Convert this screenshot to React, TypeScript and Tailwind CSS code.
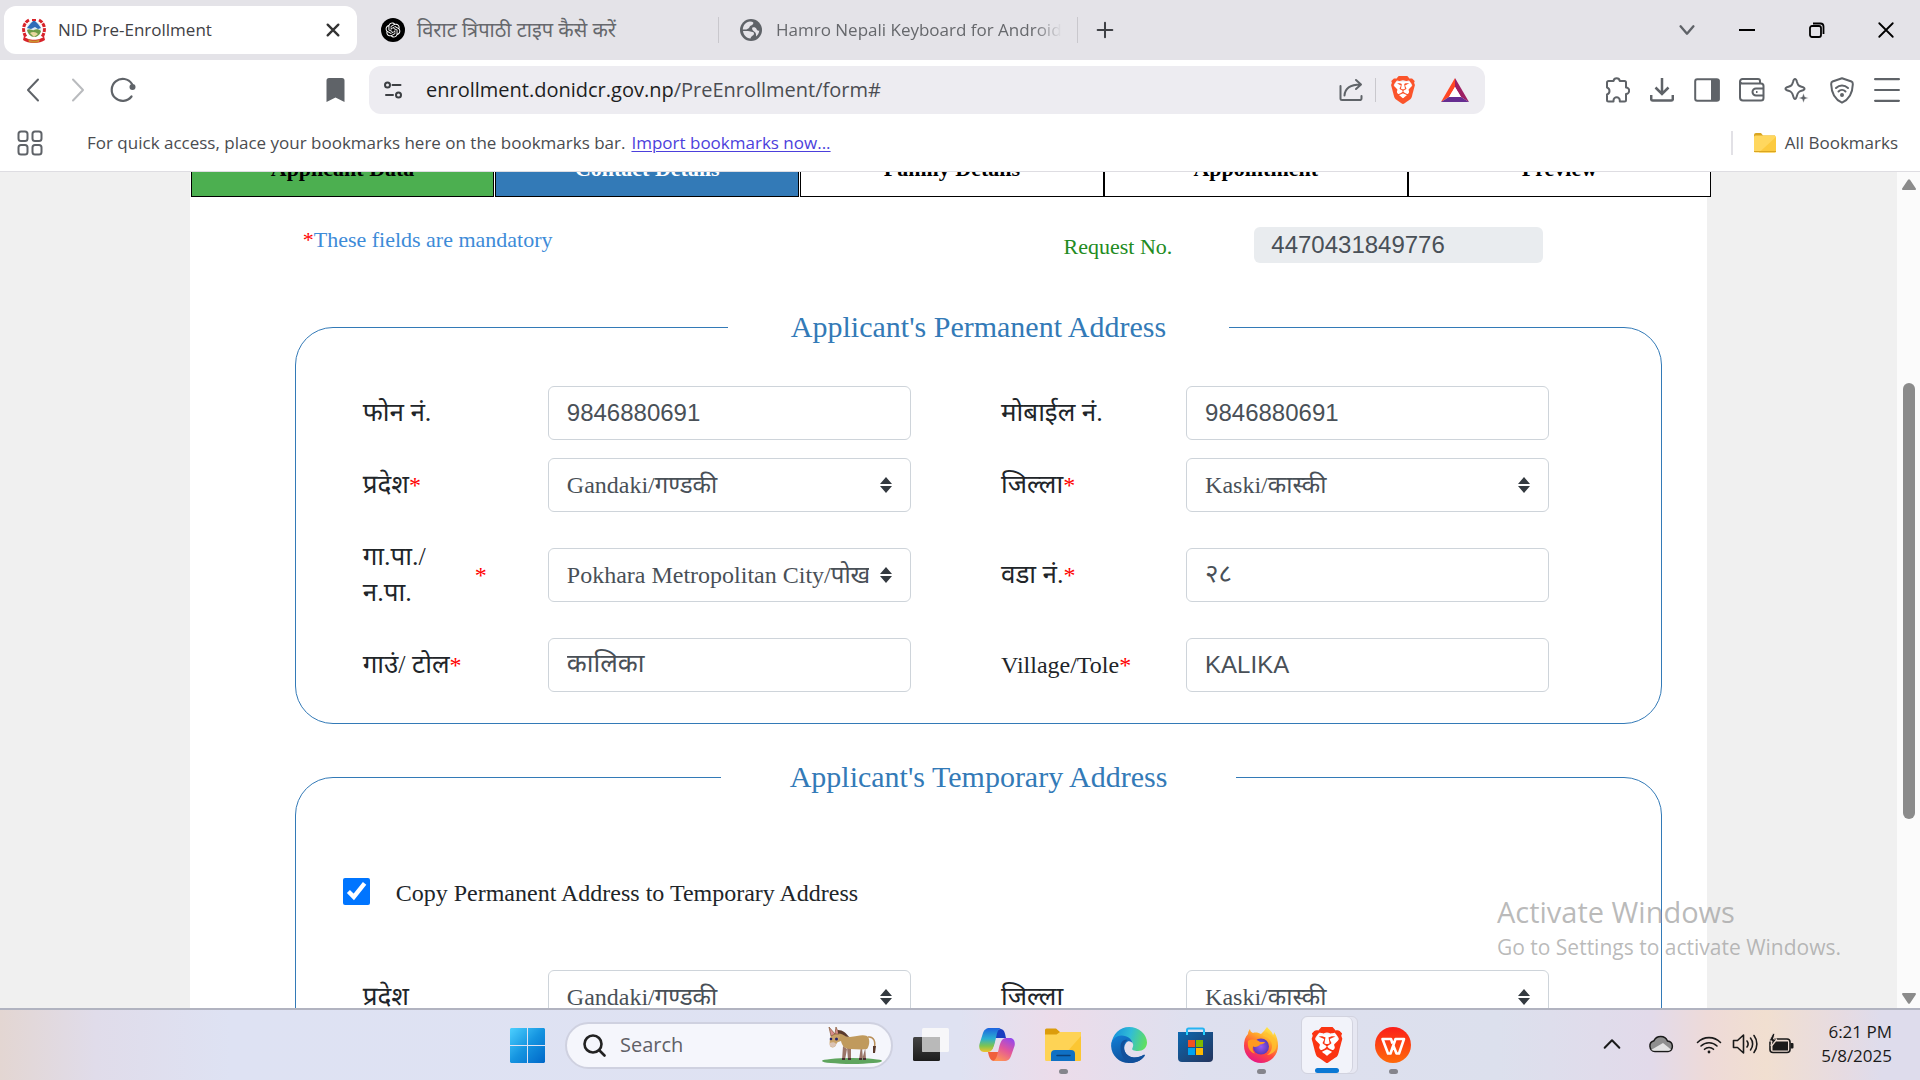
import React from "react";
import { SiBrave } from "react-icons/si";
import { RiOpenaiFill } from "react-icons/ri";

const UI = "font-['Open_Sans','Noto_Sans_Devanagari',sans-serif]";
const SERIF = "font-['Liberation_Serif','Noto_Sans_Devanagari',serif]";

/* ---------- small drawings ---------- */

function NepalEmblem() {
  return (
    <svg width="24" height="25" viewBox="0 0 24 25">
      <path d="M7 2C1 5 0 13 4 19" fill="none" stroke="#d8232a" strokeWidth="3" strokeDasharray="4 1" />
      <path d="M17 2c6 3 7 11 3 17" fill="none" stroke="#d8232a" strokeWidth="3" strokeDasharray="4 1" />
      <circle cx="12" cy="11" r="7.5" fill="#dcebf5" />
      <path d="M5 10l4-5 3-3 4 4 3 4-3 1-3-2-4 2z" fill="#2d6cb8" />
      <path d="M5 12c3-2 5 1 7 0s5-1 7 1c-1 4-4 6-7 6s-6-3-7-7z" fill="#6d9c46" />
      <path d="M8 15c3-2 6-1 8 1l-4 3z" fill="#e9d8a0" />
      <path d="M2 18c3 5 17 5 20 0l1 4c-5 4-17 4-22 0z" fill="#d8232a" />
      <path d="M6 21c3 2 9 2 12 0l-1 3c-3 1-7 1-10 0z" fill="#c9932f" />
      <path d="M10 1h4v2h-4z" fill="#d8232a" />
    </svg>
  );
}

function Globe() {
  return (
    <svg width="22" height="22" viewBox="0 0 22 22">
      <circle cx="11" cy="11" r="11" fill="#5f6368" />
      <path d="M10 2.5c3 0 4 1 3 2.5-1 1.600-3 1.500-3.500 3-.4 1.500-2 1.500-3 2.500H2.800C3 6 6 3 10 2.500z" fill="#e4e3e8" />
      <path d="M3 12h5c2 0 3 1 4.500 1s2 1.500 1 3c-.8 1-2.500 1-3 3.500C6 19 3.500 16 3 12z" fill="#e4e3e8" />
      <path d="M12.500 8.500c1.500-.6 3.500 0 4 1.500s1.500 2 2.800 1.500c-.3 3-1.800 5-3.300 6 .3-2 0-3.500-1.300-4.500-1.500-1-3.500-3-2.200-4.500z" fill="#e4e3e8" />
    </svg>
  );
}

function Line({ d, size = 24, color = "#5f6368", w = 2 }: { d: string; size?: number; color?: string; w?: number }) {
  return (
    <svg width={size} height={size} viewBox="0 0 24 24" fill="none" stroke={color} strokeWidth={w} strokeLinecap="round" strokeLinejoin="round">
      <path d={d} />
    </svg>
  );
}

function Reload() {
  return (
    <svg width="26" height="26" viewBox="0 0 26 26" fill="none" stroke="#5f6368" strokeWidth="2.200">
      <path d="M21.500 19.500A11 11 0 1 1 22 7" strokeLinecap="round" />
      <circle cx="22.500" cy="10" r="3" fill="#5f6368" stroke="none" />
    </svg>
  );
}

function Tune() {
  return (
    <svg width="18" height="18" viewBox="0 0 18 18" fill="none" stroke="#3c3f43" strokeWidth="2">
      <circle cx="3.500" cy="4" r="2.500" />
      <path d="M8.500 4h8M2 14h7" strokeLinecap="round" />
      <circle cx="14.500" cy="14" r="2.500" />
    </svg>
  );
}

function Share() {
  return (
    <svg width="24" height="24" viewBox="0 0 24 24" fill="none" stroke="#5f6368" strokeWidth="2" strokeLinecap="round" strokeLinejoin="round">
      <path d="M1.500 8v12.500a1.500 1.500 0 0 0 1.500 1.500h18.500a1.500 1.500 0 0 0 1-1.500V18" />
      <path d="M5.500 17.500C6 10 11 6.500 21.500 6.500M17 2l5 4.500-5 4.500" />
    </svg>
  );
}

function Lion({ size, color, face }: { size: number; color: string; face: string }) {
  return (
    <svg width={size} height={size} viewBox="0 0 24 24">
      <path d="M6 5h12l2 6-4 8-4 3-4-3-4-8z" fill={face} />
      <SiBrave size={24} color={color} />
    </svg>
  );
}

function Bat() {
  return (
    <svg width="28" height="24" viewBox="0 0 28 24">
      <path d="M14 0L0 24l8-5 6-10z" fill="#ff4724" />
      <path d="M14 0l14 24-8-5-6-10z" fill="#9e1f63" />
      <path d="M0 24h28l-8-5H8z" fill="#662d91" />
      <path d="M14 9l6 10H8z" fill="#fff" />
    </svg>
  );
}

function Puzzle() {
  return (
    <svg width="26" height="26" viewBox="0 0 26 26" fill="none" stroke="#5f6368" strokeWidth="2" strokeLinejoin="round">
      <path d="M3 5.500a1.500 1.500 0 0 1 1.500-1.500H9.500a3.200 3.200 0 0 1 6.300 0H20.500A1.500 1.500 0 0 1 22 5.500V10.500a3.200 3.200 0 0 1 0 6.400V23a1.500 1.500 0 0 1-1.500 1.500H15.800v-1a3 3 0 0 0-6.300 0v1H4.500A1.500 1.500 0 0 1 3 23v-5.500a3.700 3.700 0 0 0 0-7z" />
    </svg>
  );
}

function Download() {
  return (
    <svg width="24" height="24" viewBox="0 0 24 24" fill="none" stroke="#5f6368" strokeWidth="2.500">
      <path d="M12 0v15M5.500 9.500L12 16l6.500-6.500" />
      <path d="M1.200 17v4a1.500 1.500 0 0 0 1.500 1.500h18.600a1.500 1.500 0 0 0 1.500-1.500v-4" />
    </svg>
  );
}

function Sidebar() {
  return (
    <svg width="26" height="24" viewBox="0 0 26 24">
      <rect x="1.200" y="1.200" width="23.600" height="21.600" rx="2" fill="none" stroke="#5f6368" strokeWidth="2" />
      <path d="M17 1h7a1.500 1.500 0 0 1 1.500 1.500v19A1.500 1.500 0 0 1 24 23h-7z" fill="#5f6368" />
    </svg>
  );
}

function Wallet() {
  return (
    <svg width="26" height="24" viewBox="0 0 26 24" fill="none" stroke="#5f6368" strokeWidth="2" strokeLinejoin="round">
      <path d="M21 5.500V3a2 2 0 0 0-2-2H3.500A2.500 2.500 0 0 0 1 3.500v16A3 3 0 0 0 4 22.500h18a2.500 2.500 0 0 0 2.500-2.500V8A2.500 2.500 0 0 0 22 5.500H3.500A2.300 2.300 0 0 1 1 3.500" />
      <path d="M24.500 10.500H17a3.500 3.500 0 0 0 0 7h7.500M17 14h1.500" />
    </svg>
  );
}

function Sparkle() {
  return (
    <svg width="26" height="26" viewBox="0 0 26 26">
      <path d="M11 2c1 0 1.500 1 2 3 .9 3.200 1.500 3.800 4.500 4.700 2 .6 3 1 3 2s-1 1.500-3 2.100c-3 .9-3.600 1.600-4.500 4.700-.5 2-1 3.500-2 3.500s-1.500-1.500-2-3.500c-.9-3.100-1.500-3.800-4.500-4.700-2-.6-3-1.100-3-2.100s1-1.400 3-2C7.500 8.800 8.100 8.200 9 5c.5-2 1-3 2-3z" fill="none" stroke="#5f6368" strokeWidth="2" />
      <path d="M19.500 16l1.300 3.700 3.700 1.300-3.700 1.300-1.300 3.700-1.300-3.700-3.700-1.300 3.700-1.300z" fill="#5f6368" stroke="#fff" strokeWidth=".5" />
    </svg>
  );
}

function Vpn() {
  return (
    <svg width="24" height="27" viewBox="0 0 24 27" fill="none" stroke="#5f6368" strokeWidth="2" strokeLinejoin="round" strokeLinecap="round">
      <path d="M12 1.200l9.500 3.300c1.500.5 1.300 1.500 1.300 3C22.500 17 19 22.500 12 25.700 5 22.500 1.500 17 1.200 7.500c0-1.500-.2-2.500 1.300-3z" />
      <path d="M6 11c3.500-3.300 8.500-3.300 12 0M8.500 14.500c2-2 5-2 7 0" />
      <circle cx="12" cy="18" r="1" fill="#5f6368" />
    </svg>
  );
}

function FolderSmall() {
  return (
    <svg width="24" height="24" viewBox="0 0 24 24">
      <path d="M1 4a2 2 0 0 1 2-2h5l2 2.500h12V12H1z" fill="#d9a521" />
      <rect x="1" y="4.500" width="22" height="17" rx="1.500" fill="#ffd75e" />
      <path d="M23 6v14a1.500 1.500 0 0 1-1.500 1.500H6z" fill="#fcca3f" />
      <path d="M1 20.500h22" stroke="#d9a521" />
    </svg>
  );
}

function WindowsLogo() {
  return (
    <svg width="35" height="35" viewBox="0 0 35 35">
      <defs>
        <linearGradient id="win" x1="0" y1="0" x2="1" y2="1">
          <stop offset="0" stopColor="#4cd0ff" />
          <stop offset=".5" stopColor="#1594e0" />
          <stop offset="1" stopColor="#0067c8" />
        </linearGradient>
      </defs>
      <path d="M1 0h16v17H0V1zM18 0h16l1 1v16H18zM0 18h17v17H1l-1-1zM18 18h17v16l-1 1H18z" fill="url(#win)" />
    </svg>
  );
}

function Donkey() {
  return (
    <svg width="60" height="38" viewBox="0 0 60 38">
      <ellipse cx="30" cy="35" rx="30" ry="3" fill="#5fa55e" />
      <path d="M46 11c6-1 8 5 6 12" fill="none" stroke="#b98f58" strokeWidth="1.500" />
      <path d="M51 20h3l-1 7h-2z" fill="#5a3a2c" />
      <path d="M21 20l-1 14h3l2-11zM25 21l1 13h3V20zM39 20l-2 14h3l3-11zM43 19l1 14h-3l-1-11z" fill="#9a7468" />
      <path d="M13 9c4-3 8-2 11 1l4 1c7-1 13-3 17-1 3 2 3 9 0 13-5 1-11 0-17 0-5 0-8-3-9-8l-6 2z" fill="#c09a5d" />
      <path d="M9 9c2-2 7-2 9 1 0 4-3 6-4 9-1 3-5 3-6 1-1-3 0-8 1-11z" fill="#c9a268" />
      <path d="M8 17c2-1 5-1 6 1 0 2-1 3-3 3s-4-1-3-4z" fill="#dbc3b4" />
      <path d="M9 10L7 1l6 7zM13 8l1-7 3 7z" fill="#d98c8a" stroke="#8d6242" strokeWidth=".8" />
      <path d="M16 4c5 0 8 3 11 7l-3-.5c-3-2-5-3-8-3z" fill="#5a3a2c" />
      <circle cx="9" cy="13" r="1.300" fill="#25246b" />
      <circle cx="14.500" cy="13" r="1.500" fill="#25246b" />
      <path d="M20 32h3v2h-3zM26 32h3v2h-3zM37 32h3v2h-3zM41 32h3v2h-3z" fill="#4a2f34" />
    </svg>
  );
}

function TaskView() {
  return (
    <svg width="36" height="36" viewBox="0 0 36 36">
      <defs>
        <linearGradient id="tvd" x1="0" y1="0" x2="0" y2="1">
          <stop offset="0" stopColor="#444" />
          <stop offset="1" stopColor="#1c1c1c" />
        </linearGradient>
      </defs>
      <rect x="0" y="10" width="27" height="24" rx="1.500" fill="url(#tvd)" />
      <rect x="9" y="1" width="27" height="24" rx="1.500" fill="#f7f7f9" />
      <path d="M9 10h18v15H10.500L9 23.500z" fill="#b9b9b9" />
    </svg>
  );
}

function Copilot() {
  return (
    <svg width="36" height="34" viewBox="0 0 36 34">
      <defs>
        <linearGradient id="cpa" x1="0" y1="0" x2="0" y2="1">
          <stop offset="0" stopColor="#1d63e0" />
          <stop offset=".45" stopColor="#2bb0d0" />
          <stop offset=".75" stopColor="#7fc450" />
          <stop offset="1" stopColor="#f0c32c" />
        </linearGradient>
        <linearGradient id="cpb" x1=".8" y1="0" x2=".3" y2="1">
          <stop offset="0" stopColor="#9447ee" />
          <stop offset=".5" stopColor="#e2569b" />
          <stop offset="1" stopColor="#ff9456" />
        </linearGradient>
      </defs>
      <path d="M9 24c1 6 3 9 6 9h5l3-9z" fill="#f0603c" />
      <path d="M15 10c1-7 4-9 7-9 4 1 4 5 5 9z" fill="#1a3fc0" />
      <path d="M11 0h11c-4 2-4 6-5.500 12-1.500 7-3 12-7.500 12H5c-4 0-5.500-4-4.500-8L4 5c1-3 3-5 7-5z" fill="url(#cpa)" />
      <path d="M25 33H14c4-2 4-6 5.500-11 1.500-7 3-12 7.500-12h4c4 0 5.500 4 4.500 8L32 28c-1 3-3 5-7 5z" fill="url(#cpb)" />
      <path d="M17 12c.5-1.500 1.500-2 3-2h3c-2 1-3 4-4 8-1 3.500-1.500 5.500-3.500 6H12c2-2 3.500-6 5-12z" fill="#e9ddeb" />
    </svg>
  );
}

function Explorer() {
  return (
    <svg width="36" height="34" viewBox="0 0 36 34">
      <path d="M0 2a1.500 1.500 0 0 1 1.500-1.500H11L15 4h20a1 1 0 0 1 1 1v10H0z" fill="#dc9c0c" />
      <path d="M0 6.500h11.500L15 4h21v27.500a1.500 1.500 0 0 1-1.500 1.500h-33A1.500 1.500 0 0 1 0 31.500z" fill="#fed355" />
      <path d="M36 8v23.500a1.500 1.500 0 0 1-1.500 1.500H14z" fill="#fbc633" />
      <path d="M6 33v-7a4 4 0 0 1 4-4h16a4 4 0 0 1 4 4v7z" fill="#0f70c4" />
      <path d="M12 27.500h13" stroke="#0a3f77" strokeWidth="1.500" strokeLinecap="round" />
    </svg>
  );
}

function Edge() {
  return (
    <svg width="36" height="36" viewBox="0 0 36 36">
      <defs>
        <linearGradient id="eda" x1="0" y1=".4" x2="1" y2=".6">
          <stop offset="0" stopColor="#1590dc" />
          <stop offset=".5" stopColor="#31bdd6" />
          <stop offset="1" stopColor="#62e05c" />
        </linearGradient>
        <linearGradient id="edb" x1="0" y1="0" x2=".6" y2="1">
          <stop offset="0" stopColor="#1380d8" />
          <stop offset="1" stopColor="#0f4a94" />
        </linearGradient>
      </defs>
      <path d="M.3 17C1.500 7 9 0 18 0c10 0 18 7.500 18 15.500 0 5-4 8.500-9 8.500-4 0-7-1-5.500-3 1.500-3 .5-6-2-8.500L9 9z" fill="url(#eda)" />
      <path d="M.1 19C0 13 5 8.500 10.500 8.500c6 0 11 3.500 11.300 9-.5-3-4.800-4.500-6.800-1.500-4 5-1 14 8 14.500 4 0 7-1 9.500-2.500 1-.6 1.500.2 1 1C30 34 24 36 18 36 8 36 .5 28.500.1 19z" fill="url(#edb)" />
      <path d="M9.500 20c0-5 3-8 7-7-6 3-5 16 6 17.500 4 .5 7-1 10-2.500 1-.6 1.500.2 1 1C29 34.500 24 36 19 36 13 34 9.500 27 9.500 20z" fill="#11509c" />
    </svg>
  );
}

function Store() {
  return (
    <svg width="35" height="36" viewBox="0 0 35 36">
      <defs>
        <linearGradient id="sto" x1="0" y1="0" x2="1" y2="1">
          <stop offset="0" stopColor="#0c68b0" />
          <stop offset="1" stopColor="#24345c" />
        </linearGradient>
      </defs>
      <path d="M9 8V3a1.500 1.500 0 0 1 1.500-1.500h14A1.500 1.500 0 0 1 26 3v5" fill="none" stroke="#25b4f3" strokeWidth="2" />
      <path d="M0 5h35v26a4 4 0 0 1-4 4H4a4 4 0 0 1-4-4z" fill="url(#sto)" />
      <path d="M9 5v3M26 5v3" stroke="#25d4ff" strokeWidth="2" />
      <path d="M10 13h7v7h-7z" fill="#f25022" />
      <path d="M18 13h7v7h-7z" fill="#7fba00" />
      <path d="M10 21h7v7h-7z" fill="#00a4ef" />
      <path d="M18 21h7v7h-7z" fill="#ffb900" />
    </svg>
  );
}

function Firefox() {
  return (
    <svg width="36" height="36" viewBox="0 0 36 36">
      <defs>
        <linearGradient id="ffa" x1=".8" y1="0" x2=".3" y2="1">
          <stop offset="0" stopColor="#fff44f" />
          <stop offset=".35" stopColor="#ffa52a" />
          <stop offset=".65" stopColor="#ff4a3c" />
          <stop offset="1" stopColor="#e5148a" />
        </linearGradient>
        <radialGradient id="ffb">
          <stop offset="0" stopColor="#9a5cf5" />
          <stop offset="1" stopColor="#5b39b8" />
        </radialGradient>
      </defs>
      <path d="M24 0c2 3 5 4 6 8 1-1 1-2 1-3 3 4 4 9 4 14a17 17 0 0 1-34 0c0-5 1-9 4-12 0-2 1-4 2-5 0 2 1 3 3 4 3-1 6 0 8 1 2-2 4-4 6-7z" fill="url(#ffa)" />
      <circle cx="18" cy="19.500" r="8" fill="url(#ffb)" />
      <path d="M5 14c3-2 8-2 12 1h5c-1 2-3 2-5 2.500-1 2-5 3-7 2-1 3 0 5 2 7-5-1-8-6-7-12.500z" fill="#ff9a1f" />
      <path d="M19 9c5 0 10 4 10 10 0 4-2 7-5 9 8-1 11-7 9-14-2-4-6-6-10-9 0 2-2 3-4 4z" fill="#ffc22f" opacity=".8" />
    </svg>
  );
}

function Wps() {
  return (
    <svg width="36" height="36" viewBox="0 0 36 36">
      <defs>
        <linearGradient id="wps" x1="0" y1="0" x2="0" y2="1">
          <stop offset="0" stopColor="#fb1f1a" />
          <stop offset="1" stopColor="#ff6a0a" />
        </linearGradient>
      </defs>
      <circle cx="18" cy="18" r="18" fill="url(#wps)" />
      <path d="M17.500 16.500L16 12H7.500L13 26.500h2.500L20.500 12H29l-5 14.500h-2.500L18.500 19" fill="none" stroke="#fff" strokeWidth="2.600" strokeLinejoin="round" />
    </svg>
  );
}

function Cloud() {
  return (
    <svg width="26" height="18" viewBox="0 0 26 18">
      <path d="M7 16.500a5.500 5.500 0 0 1-1-10.800A7.500 7.500 0 0 1 19.500 6a5.300 5.300 0 0 1 .5 10.500z" fill="#8f8f8f" stroke="#1a1a1a" strokeWidth="1.500" />
      <path d="M3 15l12-7 8 6.500-2 1.300H6z" fill="#e3e3e3" />
    </svg>
  );
}

function Wifi() {
  return (
    <svg width="26" height="20" viewBox="0 0 26 20" fill="none" stroke="#1a1a1a" strokeWidth="1.600" strokeLinecap="round">
      <path d="M1.500 8.500a16 16 0 0 1 23 0M5 12a11.300 11.300 0 0 1 16 0M8.500 15.300a6.400 6.400 0 0 1 9 0" />
      <circle cx="13" cy="18" r="1.400" fill="#1a1a1a" stroke="none" />
    </svg>
  );
}

function Volume() {
  return (
    <svg width="26" height="22" viewBox="0 0 26 22" fill="none" stroke="#1a1a1a" strokeWidth="1.600" strokeLinejoin="round" strokeLinecap="round">
      <path d="M1.500 7.500h4L11.500 2v18l-6-5.500h-4zM15 8a5 5 0 0 1 0 6M18.500 5a9.500 9.500 0 0 1 0 12M22 2.500a14 14 0 0 1 0 17" />
    </svg>
  );
}

function Battery() {
  return (
    <svg width="26" height="22" viewBox="0 0 26 22">
      <rect x="2" y="6" width="20" height="13.500" rx="3" fill="none" stroke="#1a1a1a" strokeWidth="1.600" />
      <path d="M8 8.500h12v9H4.500V13z" fill="#1a1a1a" />
      <path d="M22.500 10h2a1 1 0 0 1 1 1v3.500a1 1 0 0 1-1 1h-2z" fill="#1a1a1a" />
      <path d="M5 0l-4 8h3l-1 5 6-7H5.500L7 1z" fill="#1a1a1a" stroke="#f0ded5" />
    </svg>
  );
}

/* ---------- browser chrome ---------- */

function TabStrip() {
  return (
    <header className={`${UI} flex h-[60px] flex-none items-center bg-[#e4e3e8] text-[17px] text-[#66686c]`}>
      <div className="ml-1 flex h-12 w-[353px] items-center rounded-xl bg-white pr-3 pl-[18px] text-[#3f4145]">
        <NepalEmblem />
        <span className="ml-3 flex-1">NID Pre-Enrollment</span>
        <button aria-label="Close tab" className="p-1">
          <Line d="M4 4l16 16M20 4L4 20" size={16} color="#333" w={3.500} />
        </button>
      </div>
      <div className="flex h-12 w-[362px] items-center border-r pl-6 [border-image:linear-gradient(transparent_25%,#c9c8cd_25%_75%,transparent_75%)_1]">
        <span className="flex size-6 items-center justify-center rounded-full bg-black text-white">
          <RiOpenaiFill size={18} />
        </span>
        <span className="ml-3 text-[20px] whitespace-nowrap">विराट त्रिपाठी टाइप कैसे करें</span>
      </div>
      <div className="flex h-12 w-[359px] items-center border-r pl-[21px] [border-image:linear-gradient(transparent_25%,#c9c8cd_25%_75%,transparent_75%)_1]">
        <Globe />
        <span className="ml-[14px] w-[286px] overflow-hidden whitespace-nowrap [mask-image:linear-gradient(to_right,black_90%,transparent)]">
          Hamro Nepali Keyboard for Android
        </span>
      </div>
      <button aria-label="New tab" className="ml-4">
        <Line d="M12 4v16M4 12h16" size={22} color="#3f4145" w={2.200} />
      </button>
      <div className="ml-auto flex items-center text-black">
        <button aria-label="Search tabs" className="flex w-[50px] justify-center">
          <Line d="M5 8l7 8 7-8" size={22} w={2.600} />
        </button>
        <button aria-label="Minimize" className="flex w-[70px] justify-center">
          <span className="h-[2px] w-4 bg-black" />
        </button>
        <button aria-label="Restore" className="flex w-[69px] justify-center">
          <svg width="16" height="16" viewBox="0 0 16 16" fill="none" stroke="#000" strokeWidth="1.800">
            <rect x="1" y="4" width="11" height="11" rx="2" />
            <path d="M4 1.500h7.500a3 3 0 0 1 3 3V12" />
          </svg>
        </button>
        <button aria-label="Close" className="flex w-[69px] justify-center">
          <Line d="M3 3l18 18M21 3L3 21" size={18} color="#000" w={2.400} />
        </button>
      </div>
    </header>
  );
}

const toolIcons: [string, React.ReactNode][] = [
  ["Extensions", <Puzzle />],
  ["Downloads", <Download />],
  ["Sidebar", <Sidebar />],
  ["Wallet", <Wallet />],
  ["Assistant", <Sparkle />],
  ["VPN", <Vpn />],
  ["Menu", <Line d="M1 2h22M1 12h22M1 22h22" size={26} />],
];

function Toolbar() {
  return (
    <div className={`${UI} flex h-[60px] flex-none items-center bg-white`}>
      <div className="flex w-[369px] items-center pl-[21px]">
        <button aria-label="Back">
          <Line d="M17 1.500L7 12l10 10.500" />
        </button>
        <button aria-label="Forward" className="ml-[21px]">
          <Line d="M7 1.500L17 12 7 22.500" color="#b9bbbe" />
        </button>
        <button aria-label="Reload" className="ml-5">
          <Reload />
        </button>
        <button aria-label="Bookmark this page" className="mr-6 ml-auto">
          <svg width="19" height="26" viewBox="0 0 19 26">
            <path d="M3 1h13a2.500 2.500 0 0 1 2.500 2.500V25l-9-4.500-9 4.500V3.500A2.500 2.500 0 0 1 3 1z" fill="#5f6368" />
          </svg>
        </button>
      </div>
      <div className="flex h-12 flex-1 items-center rounded-xl bg-[#edecf1] pr-4 pl-[15px] text-[20px]">
        <button aria-label="Site information">
          <Tune />
        </button>
        <div className="ml-6 flex-1 whitespace-nowrap text-[#4b4d52]">
          <span className="text-[#1d1e22]">enrollment.donidcr.gov.np</span>/PreEnrollment/form#
        </div>
        <button aria-label="Share">
          <Share />
        </button>
        <span className="mx-3 h-6 w-px bg-[#c9c8cd]" />
        <button aria-label="Shields" className="ml-px">
          <Lion size={28} color="#fb542b" face="#fff" />
        </button>
        <button aria-label="Rewards" className="ml-6">
          <Bat />
        </button>
      </div>
      <div className="flex w-[435px] justify-end pr-[11px]">
        {toolIcons.map(([name, icon]) => (
          <button key={name} aria-label={name} className="flex w-[45px] items-center justify-center">
            {icon}
          </button>
        ))}
      </div>
    </div>
  );
}

function BookmarksBar() {
  return (
    <div className={`${UI} flex h-[52px] flex-none items-center border-b border-[#dedde2] bg-white pb-[6px] text-[17px] text-[#4a4c50]`}>
      <button aria-label="Apps" className="ml-[17px]">
        <svg width="26" height="26" viewBox="0 0 26 26" fill="none" stroke="#5f6368" strokeWidth="2">
          <rect x="1.500" y="1.500" width="9" height="9.500" rx="2.500" />
          <rect x="15.500" y="1.500" width="9" height="9.500" rx="2.500" />
          <rect x="1.500" y="15" width="9" height="9.500" rx="2.500" />
          <rect x="15.500" y="15" width="9" height="9.500" rx="2.500" />
        </svg>
      </button>
      <span className="ml-11">For quick access, place your bookmarks here on the bookmarks bar.</span>
      <a href="#import" className="ml-[6px] text-[#4c3fdc] underline underline-offset-2">
        Import bookmarks now...
      </a>
      <button className="ml-auto flex items-center gap-2 pr-[22px]">
        <span className="mr-3 h-6 w-[2px] bg-[#e2e1e6]" />
        <FolderSmall />
        All Bookmarks
      </button>
    </div>
  );
}

/* ---------- page ---------- */

const steps = [
  { name: "Applicant Data", tone: "mr-px bg-[#4caf50] text-black" },
  { name: "Contact Details", tone: "mr-px bg-[#337ab7] text-white" },
  { name: "Family Details", tone: "bg-white text-black" },
  { name: "Appointment", tone: "bg-white text-black" },
  { name: "Preview", tone: "bg-white text-black" },
];

const box =
  "h-[54px] w-full rounded-[6px] border border-[#ced4da] bg-white pl-[18px] text-[#495057] outline-none";

type FieldProps = { id: string; label: React.ReactNode; required?: boolean; latin?: boolean; children: React.ReactNode };

function Field({ id, label, required, latin, children }: FieldProps) {
  return (
    <div className="grid grid-cols-[185fr_363fr] items-center">
      <label
        htmlFor={id}
        className={`${latin ? "text-[24px]" : "text-[26px]"} -my-[9px] flex items-center leading-9 text-[#212529]`}
      >
        {label}
        {required && <Star />}
      </label>
      {children}
    </div>
  );
}

function TextBox({ id, value, nepali }: { id: string; value: string; nepali?: boolean }) {
  return (
    <input
      id={id}
      type="text"
      defaultValue={value}
      className={`${box} ${nepali ? "text-[26px]" : "text-[24px]"} font-['Liberation_Sans','Noto_Sans_Devanagari',sans-serif]`}
    />
  );
}

function Picker({ id, value }: { id: string; value: string }) {
  return (
    <div className="relative">
      <select id={id} defaultValue={value} className={`${box} appearance-none pr-[41px] text-[24px]`}>
        <option>{value}</option>
      </select>
      <svg className="pointer-events-none absolute top-[19px] right-[19px]" width="12" height="16" viewBox="0 0 12 16" fill="#343a40">
        <path d="M6 0l6 7H0zM6 16l6-7H0z" />
      </svg>
    </div>
  );
}

const Star = () => <span className="text-[24px] text-[#ff0000]">*</span>;

function Columns({ children }: { children: React.ReactNode }) {
  return <div className="grid grid-cols-2 gap-x-[90px] pr-28 pl-[67px]">{children}</div>;
}

function Page() {
  return (
    <main className={`${SERIF} flex min-h-0 flex-1 bg-[#f0f0f0]`}>
      <div className="flex-1 overflow-hidden">
        <div className="mx-auto flow-root w-4/5 bg-white pb-10">
          <nav className="-mt-8 -mr-1 flex pl-px">
            {steps.map((s) => (
              <a
                key={s.name}
                href="#"
                className={`${s.tone} flex h-[57px] flex-1 items-center justify-center border border-black text-[22px] font-bold`}
              >
                {s.name}
              </a>
            ))}
          </nav>

          <div className="mt-[30px] mr-[164px] ml-[113px] flex text-[22px]">
            <p className="leading-[25px] text-[#3d8bd8]">
              <span className="text-[#ff0000]">*</span>
              These fields are mandatory
            </p>
            <label htmlFor="request" className="ml-auto self-end text-[#228b22]">
              Request No.
            </label>
            <input
              id="request"
              readOnly
              defaultValue="4470431849776"
              className="ml-[82px] h-9 w-[289px] rounded-[6px] bg-[#e9ecef] px-[17px] font-['Liberation_Sans',sans-serif] text-[24px] text-[#495057]"
            />
          </div>

          <fieldset className="mt-[42px] mr-[45px] ml-[105px] rounded-[38px] border border-[#337ab7] pb-[31px]">
            <legend className="mx-auto px-[63px] text-[30px] leading-[44px] text-[#337ab7]">
              Applicant's Permanent Address
            </legend>
            <div className="flex flex-col gap-9 pt-[37px]">
              <div className="flex flex-col gap-[18px]">
                <Columns>
                  <Field id="phone" label="फोन नं.">
                    <TextBox id="phone" value="9846880691" />
                  </Field>
                  <Field id="mobile" label="मोबाईल नं.">
                    <TextBox id="mobile" value="9846880691" />
                  </Field>
                </Columns>
                <Columns>
                  <Field id="province" label="प्रदेश" required>
                    <Picker id="province" value="Gandaki/गण्डकी" />
                  </Field>
                  <Field id="district" label="जिल्ला" required>
                    <Picker id="district" value="Kaski/कास्की" />
                  </Field>
                </Columns>
              </div>
              <Columns>
                <Field id="municipality" label={<span className="w-28 pr-8">गा.पा./ न.पा.</span>} required>
                  <Picker id="municipality" value="Pokhara Metropolitan City/पोखरा महानगरपालिका" />
                </Field>
                <Field id="ward" label="वडा नं." required>
                  <TextBox id="ward" value="२८" nepali />
                </Field>
              </Columns>
              <Columns>
                <Field id="tole-np" label="गाउं/ टोल" required>
                  <TextBox id="tole-np" value="कालिका" nepali />
                </Field>
                <Field id="tole" label="Village/Tole" required latin>
                  <TextBox id="tole" value="KALIKA" />
                </Field>
              </Columns>
            </div>
          </fieldset>

          <fieldset className="mt-[31px] mr-[45px] ml-[105px] rounded-[38px] border border-[#337ab7] pb-[30px]">
            <legend className="mx-auto px-[69px] text-[30px] leading-[44px] text-[#337ab7]">
              Applicant's Temporary Address
            </legend>
            <div className="flex items-center pt-[76px] pb-[59px] pl-[47px]">
              <input id="copy" type="checkbox" defaultChecked className="mb-1 size-[27px] accent-[#0075ff]" />
              <label htmlFor="copy" className="pl-[26px] text-[24px] leading-9 text-[#212529]">
                Copy Permanent Address to Temporary Address
              </label>
            </div>
            <Columns>
              <Field id="t-province" label="प्रदेश">
                <Picker id="t-province" value="Gandaki/गण्डकी" />
              </Field>
              <Field id="t-district" label="जिल्ला">
                <Picker id="t-district" value="Kaski/कास्की" />
              </Field>
            </Columns>
          </fieldset>
        </div>
      </div>
      <div className="flex w-[23px] flex-none flex-col items-center bg-[#fbfbfb] pt-[7px] pb-1">
        <svg width="14" height="11" viewBox="0 0 14 11" fill="#8b8b8b">
          <path d="M6 .8a1.300 1.300 0 0 1 2 0l5.700 8.400a1.100 1.100 0 0 1-1 1.800H1.300a1.100 1.100 0 0 1-1-1.800z" />
        </svg>
        <span className="grow-[193]" />
        <span className="w-3 grow-[437] rounded-full bg-[#8b8b8b]" />
        <span className="grow-[174]" />
        <svg width="14" height="11" viewBox="0 0 14 11" fill="#8b8b8b">
          <path d="M6 10.200a1.300 1.300 0 0 0 2 0l5.700-8.400a1.100 1.100 0 0 0-1-1.800H1.300a1.100 1.100 0 0 0-1 1.800z" />
        </svg>
      </div>
    </main>
  );
}

/* ---------- taskbar ---------- */

function TaskButton({ name, mark, children }: { name: string; mark?: boolean; children: React.ReactNode }) {
  return (
    <button aria-label={name} className="relative flex h-[70px] w-[66px] items-center justify-center">
      {children}
      {mark && <span className="absolute bottom-[6px] h-[5px] w-[9px] rounded-full bg-[#85858c]" />}
    </button>
  );
}

function Taskbar() {
  return (
    <footer
      className={`${UI} grid h-[72px] flex-none grid-cols-[1fr_auto_1fr] items-center border-t-2 border-[#b1b3c0] bg-[linear-gradient(90deg,#e3d6d2_0%,#e0dcea_5%,#dee2f3_12%,#dfe2f2_50%,#ecdcea_55%,#dee0ef_62%,#dce0ed_78%,#e2daea_86%,#eedad8_89%,#f1dfd0_92%,#e6dbe2_96%,#dedcec_98%)]`}
    >
      <div />
      <div className="flex items-center">
        <TaskButton name="Start">
          <WindowsLogo />
        </TaskButton>
        <label className="mx-[5px] flex h-[47px] w-[328px] items-center rounded-full border-2 border-[#cfd1e0] bg-[#f5f6fc] pr-[9px] pl-4">
          <svg width="23" height="23" viewBox="0 0 23 23" fill="none" stroke="#222" strokeWidth="2.600" strokeLinecap="round">
            <circle cx="10" cy="10" r="8.500" />
            <path d="M16.500 16.500l5 5" />
          </svg>
          <input aria-label="Search" placeholder="Search" className="ml-[14px] w-0 flex-1 bg-transparent text-[20px] outline-none placeholder:text-[#5f6066]" />
          <Donkey />
        </label>
        <TaskButton name="Task view">
          <TaskView />
        </TaskButton>
        <TaskButton name="Copilot">
          <Copilot />
        </TaskButton>
        <TaskButton name="File Explorer" mark>
          <Explorer />
        </TaskButton>
        <TaskButton name="Edge">
          <Edge />
        </TaskButton>
        <TaskButton name="Store">
          <Store />
        </TaskButton>
        <TaskButton name="Firefox" mark>
          <Firefox />
        </TaskButton>
        <button aria-label="Brave" className="flex h-[70px] w-[66px] items-center justify-center pl-[5px]">
          <span className="h-[58px] rounded-md border border-[#d2d3df] bg-[#e6e7f2] pr-1">
            <span className="relative flex h-full w-[51px] items-center justify-center rounded-md border-r border-[#d2d3df] bg-[#f2f3fa]">
              <Lion size={36} color="#fb3412" face="#fff" />
              <span className="absolute bottom-0 h-[5px] w-6 rounded-full bg-[#0a78d4]" />
            </span>
          </span>
        </button>
        <TaskButton name="WPS Office" mark>
          <Wps />
        </TaskButton>
      </div>
      <div className="flex items-center justify-end pr-7 pb-[2px] text-[#1a1a1a]">
        <button aria-label="Show hidden icons">
          <Line d="M4 16l8-8 8 8" size={22} color="#1a1a1a" w={2.200} />
        </button>
        <button aria-label="OneDrive" className="ml-[25px]">
          <Cloud />
        </button>
        <button aria-label="Network, volume and battery" className="ml-[22px] flex items-center gap-[10px]">
          <Wifi />
          <Volume />
          <Battery />
        </button>
        <time className="ml-[27px] text-right text-[17px] leading-6">
          6:21 PM
          <br />
          5/8/2025
        </time>
      </div>
    </footer>
  );
}

export default function App() {
  return (
    <div className="relative flex h-screen flex-col overflow-hidden">
      <TabStrip />
      <Toolbar />
      <BookmarksBar />
      <Page />
      <Taskbar />
      <div className={`${UI} pointer-events-none absolute right-[79px] bottom-[117px] text-[#9c9c9c]/70`}>
        <p className="text-[29px] leading-[38px]">Activate Windows</p>
        <p className="text-[21px] leading-8">Go to Settings to activate Windows.</p>
      </div>
    </div>
  );
}
